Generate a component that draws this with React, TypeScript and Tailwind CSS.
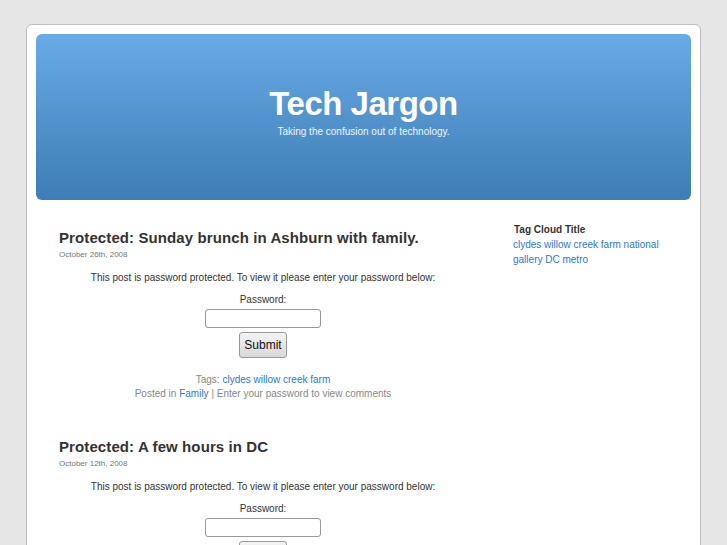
import React from "react";

function Post({ title, date, tags }: { title: string; date: string; tags?: boolean }) {
  return (
    <div className="mb-[36px]">
      <h2 className="text-[15px] leading-[20px] font-bold text-[#333] tracking-[0.1px]">{title}</h2>
      <div className="text-[8px] leading-[12px] text-[#777] mt-[1px]">{date}</div>
      <div className="text-center text-[10px] text-[#333] mt-[10px]">
        <p className="leading-[14px]">This post is password protected. To view it please enter your password below:</p>
        <div className="mt-[8px] leading-[14px]">Password:</div>
        <div className="flex flex-col items-center">
          <input type="password" className="mt-[2px] w-[116px] h-[19px] border border-[#999] rounded-[3px] bg-white" />
          <button className="mt-[4px] w-[48px] h-[26px] border border-[#999] rounded-[3px] bg-gradient-to-b from-[#f4f4f4] to-[#d8d8d8] text-[12px] text-[#111]">Submit</button>
        </div>
        {tags && (
          <div className="mt-[15px] text-[10px] leading-[14px] text-[#888]">
            <div>
              Tags: <span className="text-[#2a79d0]">clydes willow creek farm</span>
            </div>
            <div>
              Posted in <span className="text-[#2a79d0]">Family</span> | Enter your password to view comments
            </div>
          </div>
        )}
      </div>
    </div>
  );
}

export default function App() {
  return (
    <div className="h-[545px] bg-[#e6e6e6] pt-[24px] overflow-hidden" style={{ fontFamily: '"Liberation Sans", Arial, sans-serif' }}>
      <div className="mx-auto w-[675px] bg-white border border-[#bdbdbd] rounded-[6px] p-[9px] min-h-[600px]">
        <div className="h-[166px] rounded-[6px] bg-gradient-to-b from-[#68abe6] to-[#3e7db5] flex flex-col items-center text-white">
          <h1 className="mt-[50px] text-[33px] leading-[40px] font-bold tracking-[-0.5px]">Tech Jargon</h1>
          <div className="text-[10px] leading-[12px] mt-[2px] text-[#eef4fb]">Taking the confusion out of technology.</div>
        </div>
        <div className="flex pl-[23px] pt-[28px]">
          <div className="w-[408px]">
            <Post title="Protected: Sunday brunch in Ashburn with family." date="October 26th, 2008" tags />
            <Post title="Protected: A few hours in DC" date="October 12th, 2008" />
          </div>
          <div className="ml-[46px] w-[160px]">
            <div className="text-[10px] leading-[14px] font-bold text-[#333] mt-[-5px] ml-[1px]">Tag Cloud Title</div>
            <div className="text-[10px] leading-[15px] text-[#2a79d0]">clydes willow creek farm national gallery DC metro</div>
          </div>
        </div>
      </div>
    </div>
  );
}
